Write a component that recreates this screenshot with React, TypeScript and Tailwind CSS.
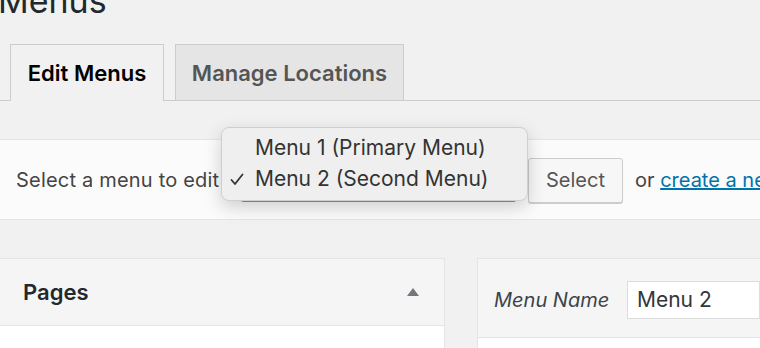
const FONT = 'font-["Inter","Roboto","Liberation_Sans",sans-serif]';

export default function App() {
  return (
    <div className={`${FONT} h-[348px] w-[760px] overflow-hidden bg-[#f1f1f1] text-[#23282d]`}>
      <h1 className="-ml-[2px] mt-[-19px] h-10 text-[34px] font-normal leading-[40px] text-[#23282d]">Menus</h1>

      {/* tabs */}
      <nav className="mt-[23px] flex h-[57px] items-end gap-[11px] border-b border-[#ccc] pl-[10px]">
        <div className="-mb-px flex h-[57px] w-[154px] shrink-0 items-center justify-center border border-b-0 border-[#ccc] bg-[#f1f1f1] pt-[1px] text-[22px] font-semibold text-black">
          Edit Menus
        </div>
        <div className="flex h-[56px] w-[229px] shrink-0 items-center justify-center border border-b-0 border-[#ccc] bg-[#e5e5e5] pt-[1px] text-[22px] font-semibold text-[#555]">
          Manage Locations
        </div>
      </nav>

      {/* select a menu box */}
      <div className="mt-[38px] flex h-[81px] items-center border-y border-[#e5e5e5] bg-[#fbfbfb] pl-4 text-[20px] text-[#444]">
        <span className="w-[224px] shrink-0 whitespace-nowrap tracking-[0.01em]">Select a menu to edit</span>
        <div className="relative mt-[2px] h-[42px] w-[277px] shrink-0 rounded-[4px] border-2 border-[#5b9dd9] bg-white">
          <div className="absolute left-[-21px] top-[-35px] z-10 h-[74px] w-[307px] rounded-[8px] border border-[#cfcfcf] bg-[#efefef] pt-[4px] text-[21px] leading-[31px] text-[#333] shadow-[0_6px_18px_rgba(0,0,0,0.18)]">
            <div className="whitespace-nowrap pl-[33px]">Menu 1 (Primary Menu)</div>
            <div className="relative whitespace-nowrap pl-[33px]">
              <svg className="absolute left-[8px] top-[10px]" width="14" height="13" viewBox="0 0 14 13">
                <path d="M1.5 7 L5 11 L12.5 1.5" fill="none" stroke="#333" strokeWidth="1.8" strokeLinecap="round" strokeLinejoin="round" />
              </svg>
              Menu 2 (Second Menu)
            </div>
          </div>
        </div>
        <button className="ml-[11px] mt-[1px] h-[45px] w-[95px] shrink-0 rounded-[3px] border border-[#ccc] bg-[#f7f7f7] text-[20px] text-[#555] shadow-[0_1px_0_#ccc]">
          Select
        </button>
        <span className="ml-[12px] shrink-0 whitespace-nowrap text-[20px] text-[#444]">
          or <a className="text-[#0073aa] underline">create a new menu</a>
        </span>
      </div>

      {/* lower columns */}
      <div className="mt-[38px] flex gap-[32px]">
        <div className="w-[445px] shrink-0 border border-l-0 border-[#e5e5e5] bg-white">
          <div className="flex h-[67px] items-center justify-between border-b border-[#e5e5e5] bg-[#f5f5f5] pl-[23px] pr-[25px]">
            <span className="text-[22px] font-semibold text-[#23282d]">Pages</span>
            <svg width="12" height="8" viewBox="0 0 12 8">
              <path d="M6 0 L12 8 L0 8 Z" fill="#72777c" />
            </svg>
          </div>
          <div className="h-[40px]" />
        </div>
        <div className="flex-1 border border-r-0 border-[#e5e5e5] bg-white">
          <div className="flex h-[79px] items-center border-b border-[#e5e5e5] bg-[#f5f5f5] pl-[16px] pt-[3px]">
            <span className="w-[133px] shrink-0 text-[20px] italic text-[#3c434a]">Menu Name</span>
            <div className="flex h-[38px] flex-1 items-center border border-[#ddd] bg-white pl-[9px] text-[21px] text-[#32373c]">
              Menu 2
            </div>
          </div>
          <div className="h-[30px]" />
        </div>
      </div>
    </div>
  );
}
